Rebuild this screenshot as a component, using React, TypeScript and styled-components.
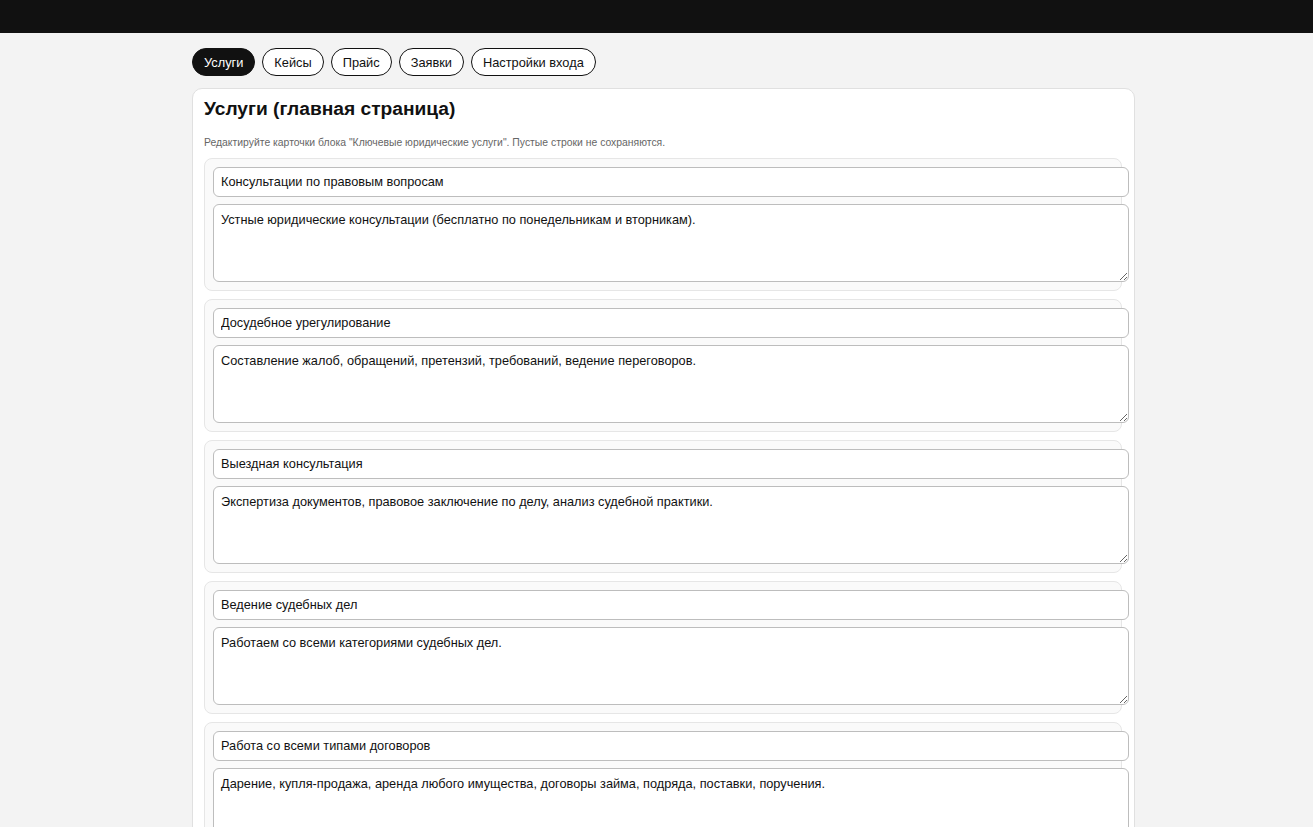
import React, {useState} from 'react';
import styled, {createGlobalStyle} from 'styled-components';

const GlobalStyle = createGlobalStyle`
  html, body {
    margin: 0;
    padding: 0;
    background: #f3f3f3;
    overflow: hidden;
    font-family: "Liberation Sans", Arial, sans-serif;
    color: #111;
  }
`;

const TopBar = styled.div`
  height: 33px;
  background: #111;
`;

const Container = styled.div`
  max-width: 961px;
  margin: 0 auto;
  padding: 15px 16px 0;
  box-sizing: border-box;
`;

const Tabs = styled.nav`
  display: flex;
  gap: 7px;
  margin-bottom: 12px;
`;

const Tab = styled.button<{active?: boolean}>`
  height: 28px;
  padding: 0 11px;
  border: 1px solid #111;
  border-radius: 999px;
  background: ${({active}) => active ? '#111' : '#fff'};
  color: ${({active}) => active ? '#fff' : '#111'};
  font-family: "Liberation Sans", Arial, sans-serif;
  font-size: 12.8px;
  cursor: pointer;
`;

const Panel = styled.section`
  width: 943px;
  box-sizing: border-box;
  background: #fff;
  border: 1px solid #e0e0e0;
  border-radius: 10px;
  padding: 8px 12px 12px 11px;
`;

const Title = styled.h2`
  margin: 0;
  font-size: 19.2px;
  line-height: 23px;
  font-weight: 700;
`;

const Hint = styled.p`
  margin: 17px 0 9px;
  font-size: 10.4px;
  line-height: 12px;
  color: #666;
`;

const Card = styled.div`
  border: 1px solid #e6e6e6;
  border-radius: 8px;
  background: #fafafa;
  padding: 8px;
  margin-bottom: 8px;
`;

const TitleInput = styled.input`
  display: block;
  width: 100%;
  height: 16px;
  padding: 6px 7px;
  border: 1px solid #bdbdbd;
  border-radius: 6px;
  background: #fff;
  font-family: "Liberation Sans", Arial, sans-serif;
  font-size: 12.75px;
  line-height: 16px;
  color: #111;
  outline: none;
`;

const TextInput = styled.textarea`
  display: block;
  width: 100%;
  height: 62px;
  margin-top: 7px;
  padding: 7px 7px;
  border: 1px solid #bdbdbd;
  border-radius: 6px;
  background: #fff;
  font-family: "Liberation Sans", Arial, sans-serif;
  font-size: 12.75px;
  line-height: 16px;
  color: #111;
  resize: vertical;
  outline: none;
`;

const tabs = ['Услуги', 'Кейсы', 'Прайс', 'Заявки', 'Настройки входа'];

const services = [
  {title: 'Консультации по правовым вопросам', text: 'Устные юридические консультации (бесплатно по понедельникам и вторникам).'},
  {title: 'Досудебное урегулирование', text: 'Составление жалоб, обращений, претензий, требований, ведение переговоров.'},
  {title: 'Выездная консультация', text: 'Экспертиза документов, правовое заключение по делу, анализ судебной практики.'},
  {title: 'Ведение судебных дел', text: 'Работаем со всеми категориями судебных дел.'},
  {title: 'Работа со всеми типами договоров', text: 'Дарение, купля-продажа, аренда любого имущества, договоры займа, подряда, поставки, поручения.'},
];

export default function App() {
  const [active, setActive] = useState(0);
  const [items, setItems] = useState(services);

  const update = (i: number, key: 'title' | 'text', value: string) => {
    setItems(items.map((it, idx) => idx === i ? {...it, [key]: value} : it));
  };

  return (
    <>
      <GlobalStyle />
      <TopBar />
      <Container>
        <Tabs>
          {tabs.map((t, i) => (
            <Tab key={t} active={i === active} onClick={() => setActive(i)}>{t}</Tab>
          ))}
        </Tabs>
        <Panel>
          <Title>Услуги (главная страница)</Title>
          <Hint>Редактируйте карточки блока "Ключевые юридические услуги". Пустые строки не сохраняются.</Hint>
          {items.map((it, i) => (
            <Card key={i}>
              <TitleInput value={it.title} onChange={(e) => update(i, 'title', e.target.value)} />
              <TextInput value={it.text} onChange={(e) => update(i, 'text', e.target.value)} />
            </Card>
          ))}
        </Panel>
      </Container>
    </>
  );
}
